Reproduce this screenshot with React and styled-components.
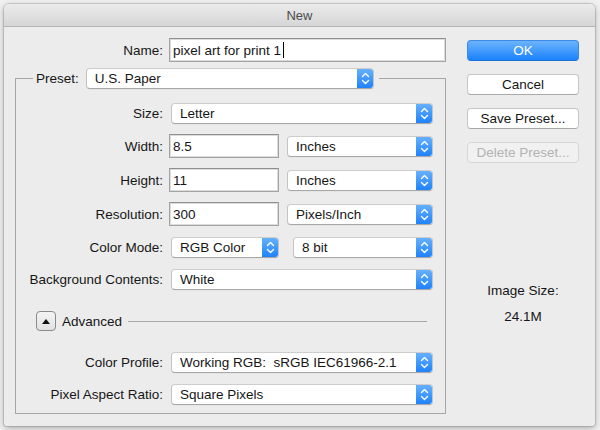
import React from 'react';
import styled, { createGlobalStyle } from 'styled-components';

const Global = createGlobalStyle`
  html, body { margin: 0; padding: 0; background: #f1f1f1; }
  body {
    font-family: "Liberation Sans", Arial, sans-serif;
    font-size: 13.5px;
    color: #161616;
  }
  #root { width: 600px; height: 430px; padding: 4px; box-sizing: border-box; }
`;

const Window = styled.div`
  width: 591px;
  height: 422px;
  background: #ececec;
  border-radius: 5px 5px 3px 3px;
  overflow: hidden;
  box-shadow: 0 0 0 1px rgba(0, 0, 0, 0.12), 0 2px 7px rgba(0, 0, 0, 0.3);
  display: flex;
  flex-direction: column;
`;

const TitleBar = styled.div`
  height: 22px;
  flex-shrink: 0;
  border-bottom: 1px solid #b3b3b3;
  background: linear-gradient(#ebebeb, #d6d6d6);
  display: flex;
  align-items: center;
  justify-content: center;
  font-size: 13px;
  color: #4b4b4b;
`;

const Body = styled.div`
  display: flex;
  align-items: flex-start;
  gap: 21px;
  padding: 11px 16px 0 11px;
`;

const LeftCol = styled.div`
  width: 431px;
  display: flex;
  flex-direction: column;
`;

const RightCol = styled.div`
  width: 112px;
  display: flex;
  flex-direction: column;
  gap: 13px;
  padding-top: 2px;
`;

const Row = styled.div`
  display: flex;
  align-items: center;
  height: 24px;
  margin-top: ${(p) => p.$mt || 0}px;
`;

const Label = styled.div`
  width: ${(p) => p.$w}px;
  flex-shrink: 0;
  text-align: right;
  margin-right: 6px;
  white-space: nowrap;
`;

const TextBox = styled.div`
  width: ${(p) => p.$w}px;
  height: 24px;
  box-sizing: border-box;
  background: #fff;
  border: 1px solid #a3a3a3;
  border-top-color: #8f8f8f;
  box-shadow: inset 0 0 0 1px #dcdcdc;
  display: flex;
  align-items: center;
  padding-left: 3px;
  white-space: nowrap;
`;

const Caret = styled.span`
  display: inline-block;
  width: 1px;
  height: 16px;
  background: #000;
  margin-left: 2px;
`;

const PopupBox = styled.div`
  width: ${(p) => p.$w}px;
  height: 21px;
  margin-left: ${(p) => p.$ml || 0}px;
  box-sizing: border-box;
  flex-shrink: 0;
  display: flex;
  background: #fff;
  border: 1px solid #c3c3c3;
  border-top-color: #cdcdcd;
  border-bottom-color: #a8a8a8;
  border-radius: 4px;
  box-shadow: 0 0.5px 0 rgba(0, 0, 0, 0.06);
  overflow: hidden;
`;

const PopupText = styled.div`
  flex: 1;
  display: flex;
  align-items: center;
  padding-left: 8px;
  white-space: nowrap;
  overflow: hidden;
`;

const PopupArrows = styled.div`
  width: 17px;
  flex-shrink: 0;
  margin: -1px -1px -1px 0;
  background: linear-gradient(#6ab3fd, #1b80f9);
  border-radius: 0 4px 4px 0;
  display: flex;
  align-items: center;
  justify-content: center;
`;

const Chevrons = () => (
  <svg width="17" height="21" viewBox="0 0 17 21">
    <path d="M5.5 8.5 L8.5 5.5 L11.5 8.5" fill="none" stroke="#fff" strokeWidth="1.4" strokeLinecap="round" strokeLinejoin="round" />
    <path d="M5.5 12.5 L8.5 15.5 L11.5 12.5" fill="none" stroke="#fff" strokeWidth="1.4" strokeLinecap="round" strokeLinejoin="round" />
  </svg>
);

const Popup = ({ w, ml, children }) => (
  <PopupBox $w={w} $ml={ml}>
    <PopupText>{children}</PopupText>
    <PopupArrows>
      <Chevrons />
    </PopupArrows>
  </PopupBox>
);

const Group = styled.fieldset`
  margin: 6px 0 0;
  padding: 0 0 7px;
  border: 1px solid #a6a6a6;
  min-width: 0;
  width: 431px;
  box-sizing: border-box;
`;

const Legend = styled.legend`
  margin-left: 17px;
  padding: 0 5px 0 3px;
  display: flex;
  align-items: center;
  gap: 7px;
  height: 21px;
`;

const Disclosure = styled.div`
  width: 20px;
  height: 20px;
  box-sizing: border-box;
  margin-left: 20px;
  border: 1px solid #8a8a8a;
  border-radius: 4px;
  background: linear-gradient(#f4f4f4, #e2e2e2);
  display: flex;
  align-items: center;
  justify-content: center;
  flex-shrink: 0;
`;

const AdvText = styled.span`
  margin-left: 6px;
`;

const Rule = styled.div`
  flex: 1;
  height: 1px;
  background: #a9a9a9;
  margin: 0 18px 0 6px;
`;

const Button = styled.div`
  height: 21px;
  box-sizing: border-box;
  border-radius: 4px;
  display: flex;
  align-items: center;
  justify-content: center;
  white-space: nowrap;
  ${(p) =>
    p.$variant === 'primary'
      ? `
    background: linear-gradient(#6cb4fc, #1a82fb);
    border: 1px solid #3b8ae8;
    border-bottom-color: #1f6fd8;
    color: #fff;
  `
      : p.$variant === 'disabled'
      ? `
    background: #f1f1f1;
    border: 1px solid #d6d6d6;
    color: #b3b3b3;
  `
      : `
    background: #fff;
    border: 1px solid #c6c6c6;
    border-bottom-color: #a9a9a9;
    color: #161616;
  `}
`;

const InfoLabel = styled.div`
  text-align: center;
  margin-top: ${(p) => p.$mt}px;
  line-height: 16px;
`;

export default function App() {
  return (
    <>
      <Global />
      <Window>
        <TitleBar>New</TitleBar>
        <Body>
          <LeftCol>
            <Row>
              <Label $w={148}>Name:</Label>
              <TextBox $w={277}>
                pixel art for print 1<Caret />
              </TextBox>
            </Row>
            <Group>
              <Legend>
                <span>Preset:</span>
                <Popup w={288}>U.S. Paper</Popup>
              </Legend>
              <Row $mt={12}>
                <Label $w={147}>Size:</Label>
                <Popup w={262} ml={2}>Letter</Popup>
              </Row>
              <Row $mt={9}>
                <Label $w={147}>Width:</Label>
                <TextBox $w={110}>8.5</TextBox>
                <Popup w={146} ml={8}>Inches</Popup>
              </Row>
              <Row $mt={10}>
                <Label $w={147}>Height:</Label>
                <TextBox $w={110}>11</TextBox>
                <Popup w={146} ml={8}>Inches</Popup>
              </Row>
              <Row $mt={10}>
                <Label $w={147}>Resolution:</Label>
                <TextBox $w={110}>300</TextBox>
                <Popup w={146} ml={8}>Pixels/Inch</Popup>
              </Row>
              <Row $mt={9}>
                <Label $w={147}>Color Mode:</Label>
                <Popup w={108} ml={2}>RGB Color</Popup>
                <Popup w={140} ml={14}>8 bit</Popup>
              </Row>
              <Row $mt={8}>
                <Label $w={147}>Background Contents:</Label>
                <Popup w={262} ml={2}>White</Popup>
              </Row>
              <Row $mt={18}>
                <Disclosure>
                  <svg width="10" height="7" viewBox="0 0 10 7">
                    <path d="M1 6 L5 1 L9 6 Z" fill="#111" />
                  </svg>
                </Disclosure>
                <AdvText>Advanced</AdvText>
                <Rule />
              </Row>
              <Row $mt={17}>
                <Label $w={147}>Color Profile:</Label>
                <Popup w={262} ml={2}>Working RGB:&nbsp; sRGB IEC61966-2.1</Popup>
              </Row>
              <Row $mt={8}>
                <Label $w={147}>Pixel Aspect Ratio:</Label>
                <Popup w={262} ml={2}>Square Pixels</Popup>
              </Row>
            </Group>
          </LeftCol>
          <RightCol>
            <Button $variant="primary">OK</Button>
            <Button>Cancel</Button>
            <Button>Save Preset...</Button>
            <Button $variant="disabled">Delete Preset...</Button>
            <InfoLabel $mt={107}>Image Size:</InfoLabel>
            <InfoLabel $mt={-3}>24.1M</InfoLabel>
          </RightCol>
        </Body>
      </Window>
    </>
  );
}
